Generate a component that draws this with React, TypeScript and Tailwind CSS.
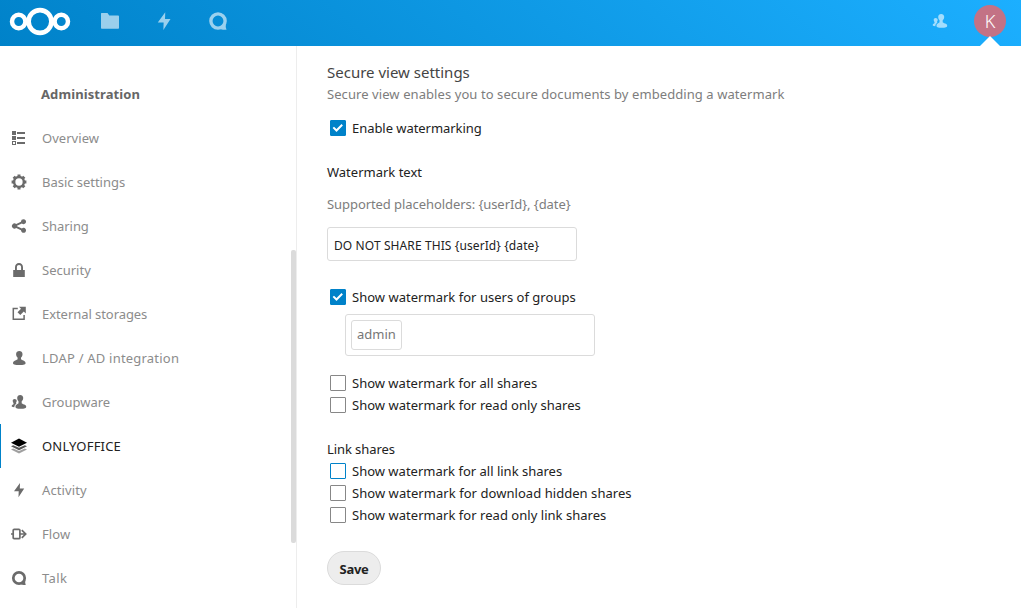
import React from 'react';

const TalkIcon = () => (
  <svg viewBox="0 0 16 16" width="16" height="16" fill="none" stroke="currentColor">
    <circle cx="8" cy="8" r="5.700" strokeWidth="2.700" />
    <path d="M9.500 13.800c1.500 1.300 3.500 1.600 5.400.9-.6-.9-.9-2.200-.6-4.200z" fill="currentColor" stroke="none" />
  </svg>
);

const BoltIcon = () => (
  <svg viewBox="0 0 16 16" width="16" height="16" fill="currentColor">
    <path d="M9 1 3 9.200h4.700L7.500 15.200 13.200 6.400H8.800z" />
  </svg>
);

const GroupIcon = () => (
  <svg viewBox="0 0 16 16" width="16" height="16" fill="currentColor">
    <path d="M9.200 1C7.400 1 6.200 2.200 6.200 3.800c0 1.500.4 2.700 1.300 3.500v1.900c-.3.800-3 1.200-3 3.200 0 1.200.4 1.500 1 1.800 1.500.7 6.700.7 8.500 0 .8-.4 1.200-.7 1.200-1.800 0-1.900-4.100-2.300-4.500-3.200V7.300c1.200-.8 1.500-2 1.500-3.500C12.200 2.200 10.900 1 9.200 1z" />
    <path d="M3.600 5C2.500 5 1.700 5.800 1.700 6.800c0 .9.300 1.700.8 2.200v1C2.300 10.600.7 10.700.7 12c0 .8.300 1 2.600 1.200.1-1.700 1-2.700 2.200-3.400L4.900 9c.500-.5.800-1.300.8-2.200C5.700 5.800 4.700 5 3.600 5z" />
  </svg>
);

const OverviewIcon = () => (
  <svg viewBox="0 0 16 16" width="16" height="16" fill="currentColor" shapeRendering="crispEdges">
    <path d="M1 1h4v4H1zM1 6h4v4H1zM6 2h8v2H6zM6 7h8v2H6zM6 12h8v2H6z" />
    <path d="M1 11h4v4H1zM2 12v2h2v-2z" fillRule="evenodd" />
  </svg>
);

const GearIcon = () => (
  <svg viewBox="0 0 16 16" width="16" height="16" fill="none" stroke="currentColor">
    <circle cx="8" cy="8" r="4.900" strokeWidth="2.500" />
    <path
      strokeWidth="3"
      d="M8 .6v2.700M8 12.700v2.700M.6 8h2.700M12.700 8h2.700M2.700 2.700l1.900 1.900M11.400 11.400l1.900 1.900M2.700 13.300l1.900-1.900M11.400 4.600l1.900-1.900"
    />
  </svg>
);

const ShareIcon = () => (
  <svg viewBox="0 0 16 16" width="16" height="16" fill="currentColor">
    <path d="M12.500 1.200a2.500 2.500 0 0 0-2.500 2.600L5.200 6a2.600 2.600 0 1 0 0 4l4.800 2.300a2.500 2.500 0 1 0 .9-1.900L6 8.200v-.4l4.900-2.200a2.500 2.500 0 1 0 1.600-4.400z" />
  </svg>
);

const LockIcon = () => (
  <svg viewBox="0 0 16 16" width="16" height="16" fill="currentColor">
    <path d="M8 1C5.600 1 4 2.800 4 5.200V8H2.200v7h11.600V8H12V5.200C12 2.800 10.400 1 8 1zm0 1.900c1.300 0 2.100.9 2.100 2.300V8H5.900V5.200c0-1.400.8-2.300 2.100-2.300z" />
  </svg>
);

const ExternalIcon = () => (
  <svg viewBox="0 0 16 16" width="16" height="16" fill="currentColor">
    <path d="M8 .8 10 2.800 6.500 6.300 9.300 9.100 12.800 5.600 14.800 7.600V.8z" />
    <path d="M6.800 2.500H2.300v10.800h10.800V9" fill="none" stroke="currentColor" strokeWidth="1.500" />
  </svg>
);

const UserIcon = () => (
  <svg viewBox="0 0 16 16" width="16" height="16" fill="currentColor">
    <path d="M8.300 1C6.500 1 5.100 2.200 5.100 4c0 1.700.500 2.700 1.500 3.600v1.700C6.200 10.200 2 10.600 2 13c0 .8.500 1.200 1.200 1.400 2.400.8 7.800.8 10.200 0 .7-.2 1.200-.6 1.200-1.400 0-2.400-4.200-2.800-4.600-3.700V7.600c1-.9 1.500-1.900 1.500-3.600C11.500 2.200 10.100 1 8.300 1z" />
  </svg>
);

const LayersIcon = () => (
  <svg viewBox="0 0 16 16" width="16" height="16">
    <path d="M0 11.500 2.200 10.500 8 13l5.800-2.500 2.200 1-8 3.900z" fill="#a0a0a0" />
    <path d="M0 8.300 2.200 7.300 8 9.800l5.800-2.500 2.200 1-8 3.900z" fill="#555" />
    <path d="M8 .6 16 4.700 8 8.700 0 4.700z" fill="#000" />
  </svg>
);

const FlowIcon = () => (
  <svg viewBox="0 0 16 16" width="16" height="16" fill="none" stroke="currentColor" strokeWidth="1.700">
    <path d="M8.900 8v3.700q0 1-1 1H3.200q-1 0-1-1V4.300q0-1 1-1h4.700q1 0 1 1V8M0 8h2.200M8.900 8h5.600M10.800 4.200 14.700 8l-3.900 3.800" />
  </svg>
);

const navItems = [
  { label: 'Overview', icon: <OverviewIcon />, track: 'tracking-[0.04px]' },
  { label: 'Basic settings', icon: <GearIcon />, track: 'tracking-[-0.03px]' },
  { label: 'Sharing', icon: <ShareIcon />, track: 'tracking-[-0.06px]' },
  { label: 'Security', icon: <LockIcon />, track: 'tracking-normal' },
  { label: 'External storages', icon: <ExternalIcon />, track: 'tracking-[-0.06px]' },
  { label: 'LDAP / AD integration', icon: <UserIcon />, track: 'tracking-[0.21px]' },
  { label: 'Groupware', icon: <GroupIcon />, track: 'tracking-normal' },
  { label: 'ONLYOFFICE', icon: <LayersIcon />, active: true, track: 'tracking-[0.2px]' },
  { label: 'Activity', icon: <BoltIcon />, track: 'tracking-[0.12px]' },
  { label: 'Flow', icon: <FlowIcon />, track: 'tracking-[0.12px]' },
  { label: 'Talk', icon: <TalkIcon />, track: 'tracking-[0.35px]' },
];

function Header() {
  return (
    <header className="flex h-[46px] shrink-0 items-start bg-[linear-gradient(40deg,#0082c9_0%,#1cafff_100%)] text-white">
      <svg className="ml-[9px] mt-[7px]" width="62" height="29" viewBox="0 0 62 29" fill="none" stroke="#fff">
        <circle cx="31" cy="14.500" r="11.400" strokeWidth="4.700" />
        <circle cx="9.700" cy="14.500" r="6.700" strokeWidth="4.500" />
        <circle cx="52.300" cy="14.500" r="6.700" strokeWidth="4.500" />
      </svg>
      <svg className="ml-[29px] mt-[11px] opacity-60" width="20" height="20" viewBox="0 0 20 20" fill="#fff">
        <path d="M1.500 2h6L9.300 4.600h8.900q.8 0 .8.800V17q0 .8-.8.800H1.800q-.8 0-.8-.8V2.500z" />
      </svg>
      <span className="ml-[34px] mt-[11px] opacity-60 [&>svg]:h-5 [&>svg]:w-5"><BoltIcon /></span>
      <span className="ml-[34px] mt-[11px] opacity-60 [&>svg]:h-5 [&>svg]:w-5"><TalkIcon /></span>
      <span className="ml-auto mt-[13px] opacity-60"><GroupIcon /></span>
      <div className="relative ml-[26px] mr-[15px] h-[46px] w-8">
        <div className="mt-[5px] flex h-8 w-8 items-center justify-center rounded-full bg-[#c37285] pb-px text-[18px] font-light leading-8">K</div>
        <svg className="absolute bottom-0 left-[6px]" width="20" height="10" viewBox="0 0 20 10" fill="#fff">
          <path d="M0 10 10 0l10 10z" />
        </svg>
      </div>
    </header>
  );
}

function Check({ label, checked = false, focus = false, className = '' }: { label: string; checked?: boolean; focus?: boolean; className?: string }) {
  const box = checked ? 'border-[#0082c9] bg-[#0082c9]' : focus ? 'border-[#0082c9]' : 'border-[#878787]';
  return (
    <label className={`flex h-[22px] items-center pl-[3px] ${className}`}>
      <span className={`flex h-4 w-4 shrink-0 items-center justify-center rounded-[1px] border ${box}`}>
        {checked && (
          <svg width="12" height="12" viewBox="0 0 12 12" fill="none" stroke="#fff" strokeWidth="2">
            <path d="M1.300 5.400 4.500 8.500l5.700-5.700" />
          </svg>
        )}
      </span>
      <span className="ml-[6px]">{label}</span>
    </label>
  );
}

export default function App() {
  return (
    <div className="flex h-[608px] w-[1021px] flex-col overflow-hidden whitespace-nowrap bg-white font-['Noto_Sans',sans-serif] text-[13px] leading-[22px] text-[#222]">
      <Header />
      <div className="flex min-h-0 flex-1">
        <aside className="flex w-[297px] shrink-0 justify-between border-r border-[#ededed]">
          <nav className="flex-1 pt-[26px] text-[#8c8c8c]">
            <h2 className="h-11 pl-[41px] font-bold leading-[44px] tracking-[0.1px] text-[#666]">Administration</h2>
            {navItems.map((n) => (
              <a
                key={n.label}
                className={`flex h-11 items-center border-l ${n.active ? 'border-[#0082c9] text-[#222]' : 'border-transparent'}`}
              >
                <span className="ml-[10px] text-[#6b6b6b]">{n.icon}</span>
                <span className={`ml-[15px] ${n.track}`}>{n.label}</span>
              </a>
            ))}
          </nav>
          <div className="mt-[204px] h-[293px] w-[5px] rounded-[2px] bg-[#dbdbdb]" />
        </aside>
        <main className="flex-1 pl-[30px] pt-[15px]">
          <h2 className="h-[22px] text-[15px] text-[#444]">Secure view settings</h2>
          <p className="h-[22px] tracking-[0.078px] text-[#7d7d7d]">Secure view enables you to secure documents by embedding a watermark</p>
          <Check label="Enable watermarking" checked className="mt-3 tracking-[-0.05px]" />
          <p className="mt-[22px]">Watermark text</p>
          <p className="mt-[10px] tracking-[-0.07px] text-[#7d7d7d]">Supported placeholders: {'{userId}, {date}'}</p>
          <div className="mt-3 flex h-[34px] w-[250px] items-center rounded-[3px] border border-[#dbdbdb] px-[6px] pt-[3px] text-[12px] tracking-[0.1px]">
            DO NOT SHARE THIS {'{userId} {date}'}
          </div>
          <Check label="Show watermark for users of groups" checked className="mt-[25px] tracking-[0.02px]" />
          <div className="ml-[18px] mt-[6px] flex h-[42px] w-[250px] items-center rounded-[3px] border border-[#dbdbdb] px-[5px]">
            <span className="flex h-[30px] items-center rounded-[3px] border border-[#dbdbdb] px-[5px] pb-[2px] text-[#777]">admin</span>
          </div>
          <Check label="Show watermark for all shares" className="mt-4" />
          <Check label="Show watermark for read only shares" className="tracking-[0.02px]" />
          <p className="mt-[22px] tracking-[-0.08px]">Link shares</p>
          <Check label="Show watermark for all link shares" focus />
          <Check label="Show watermark for download hidden shares" className="tracking-[0.05px]" />
          <Check label="Show watermark for read only link shares" className="tracking-[0.03px]" />
          <button className="mt-[25px] flex h-[34px] w-[54px] items-center justify-center rounded-full border border-[#dbdbdb] bg-[#ededed] pt-[2px] font-bold tracking-[-0.3px]">
            Save
          </button>
        </main>
      </div>
    </div>
  );
}
